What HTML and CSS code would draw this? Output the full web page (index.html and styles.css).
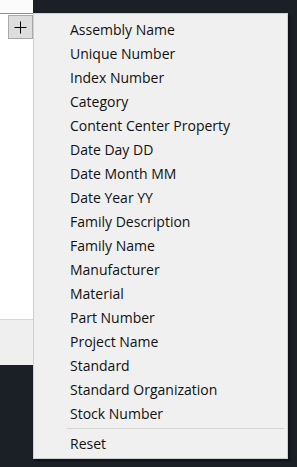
FILE: index.html
```html
<!DOCTYPE html>
<html lang="en">
<head>
    <meta charset="utf-8">
    <meta name="viewport" content="width=device-width, initial-scale=1">
    <title>Properties</title>
    <link rel="stylesheet" href="styles.css">
</head>
<body>
    <div class="screen">
        <!-- left panel behind the popup -->
        <div class="panel">
            <div class="panel-top"></div>
            <div class="panel-body">
                <button class="addbutt">
                    <svg width="13" height="13" viewBox="0 0 13 13">
                        <path d="M6.5 0.5 V12.5 M0.5 6.5 H12.5" stroke="#000" stroke-width="1" fill="none"/>
                    </svg>
                </button>
            </div>
            <div class="panel-foot"></div>
        </div>

        <!-- context menu -->
        <div class="menu">
            <div class="item">Assembly Name</div>
            <div class="item">Unique Number</div>
            <div class="item">Index Number</div>
            <div class="item">Category</div>
            <div class="item">Content Center Property</div>
            <div class="item">Date Day DD</div>
            <div class="item">Date Month MM</div>
            <div class="item">Date Year YY</div>
            <div class="item">Family Description</div>
            <div class="item">Family Name</div>
            <div class="item">Manufacturer</div>
            <div class="item">Material</div>
            <div class="item">Part Number</div>
            <div class="item">Project Name</div>
            <div class="item">Standard</div>
            <div class="item">Standard Organization</div>
            <div class="item">Stock Number</div>
            <div class="sep"></div>
            <div class="item">Reset</div>
        </div>
    </div>
</body>
</html>
```

FILE: styles.css
```css
html, body {
    margin: 0;
    height: 100%;
}

body {
    background: #1b1f26;
    font-family: "Open Sans", "Noto Sans", sans-serif;
}

.screen {
    position: relative;
    width: 297px;
    height: 467px;
}

.panel {
    width: 33px;
    display: flex;
    flex-direction: column;
}

.panel-top {
    height: 13px;
    background: #fbfbfb;
    border-bottom: 1px solid #8e8e8e;
}

.panel-body {
    height: 304px;
    background: #ffffff;
    border-bottom: 1px solid #d6d6d6;
    padding: 1px 0 0 8px;
}

.panel-foot {
    height: 45px;
    background: #efefef;
}

.addbutt {
    width: 25px;
    height: 24px;
    margin: 0;
    padding: 0;
    border: 1px solid #a9a9a9;
    background: #dddddd;
    display: flex;
    justify-content: center;
    align-items: center;
}

.menu {
    position: absolute;
    left: 33px;
    top: 13px;
    width: 253px;
    padding: 4px 0 2px 0;
    background: #f0f0f0;
    border: 1px solid #cfcfcf;
    box-shadow: 2px 2px 2px rgba(0, 0, 0, 0.45);
}

.item {
    height: 24px;
    line-height: 24px;
    padding-left: 36px;
    font-size: 14px;
    color: #111111;
    white-space: nowrap;
}

.sep {
    height: 1px;
    background: #d4d4d4;
    margin: 2px 3px 3px 33px;
}
```
